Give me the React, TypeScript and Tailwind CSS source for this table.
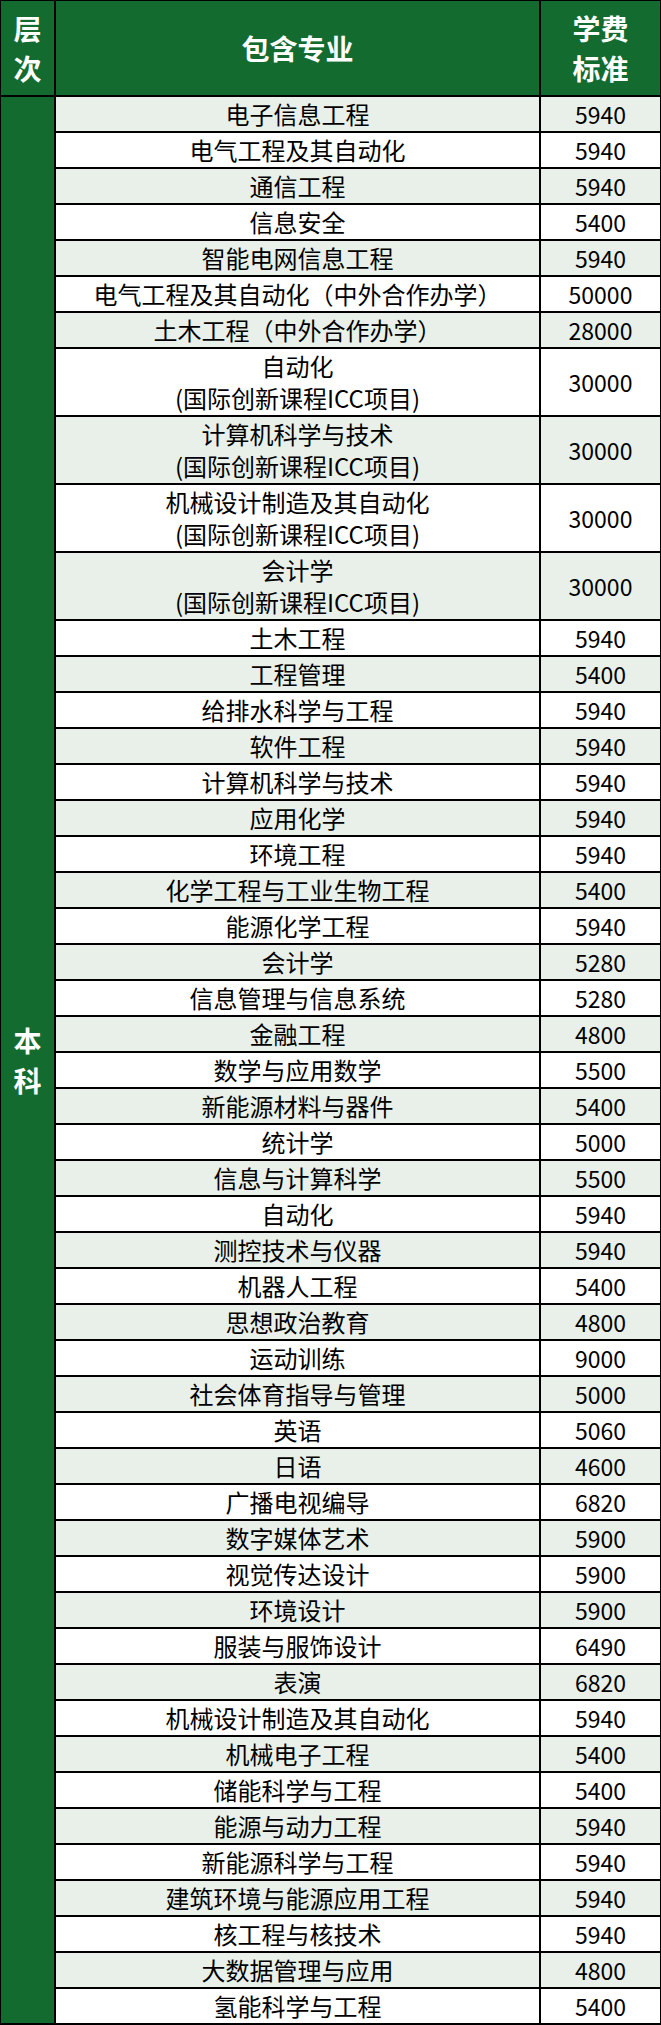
import React from "react";

type Row = { name: string; sub?: string; fee: string };

const rows: Row[] = [
  { name: "电子信息工程", fee: "5940" },
  { name: "电气工程及其自动化", fee: "5940" },
  { name: "通信工程", fee: "5940" },
  { name: "信息安全", fee: "5400" },
  { name: "智能电网信息工程", fee: "5940" },
  { name: "电气工程及其自动化（中外合作办学）", fee: "50000" },
  { name: "土木工程（中外合作办学）", fee: "28000" },
  { name: "自动化", sub: "(国际创新课程ICC项目)", fee: "30000" },
  { name: "计算机科学与技术", sub: "(国际创新课程ICC项目)", fee: "30000" },
  { name: "机械设计制造及其自动化", sub: "(国际创新课程ICC项目)", fee: "30000" },
  { name: "会计学", sub: "(国际创新课程ICC项目)", fee: "30000" },
  { name: "土木工程", fee: "5940" },
  { name: "工程管理", fee: "5400" },
  { name: "给排水科学与工程", fee: "5940" },
  { name: "软件工程", fee: "5940" },
  { name: "计算机科学与技术", fee: "5940" },
  { name: "应用化学", fee: "5940" },
  { name: "环境工程", fee: "5940" },
  { name: "化学工程与工业生物工程", fee: "5400" },
  { name: "能源化学工程", fee: "5940" },
  { name: "会计学", fee: "5280" },
  { name: "信息管理与信息系统", fee: "5280" },
  { name: "金融工程", fee: "4800" },
  { name: "数学与应用数学", fee: "5500" },
  { name: "新能源材料与器件", fee: "5400" },
  { name: "统计学", fee: "5000" },
  { name: "信息与计算科学", fee: "5500" },
  { name: "自动化", fee: "5940" },
  { name: "测控技术与仪器", fee: "5940" },
  { name: "机器人工程", fee: "5400" },
  { name: "思想政治教育", fee: "4800" },
  { name: "运动训练", fee: "9000" },
  { name: "社会体育指导与管理", fee: "5000" },
  { name: "英语", fee: "5060" },
  { name: "日语", fee: "4600" },
  { name: "广播电视编导", fee: "6820" },
  { name: "数字媒体艺术", fee: "5900" },
  { name: "视觉传达设计", fee: "5900" },
  { name: "环境设计", fee: "5900" },
  { name: "服装与服饰设计", fee: "6490" },
  { name: "表演", fee: "6820" },
  { name: "机械设计制造及其自动化", fee: "5940" },
  { name: "机械电子工程", fee: "5400" },
  { name: "储能科学与工程", fee: "5400" },
  { name: "能源与动力工程", fee: "5940" },
  { name: "新能源科学与工程", fee: "5940" },
  { name: "建筑环境与能源应用工程", fee: "5940" },
  { name: "核工程与核技术", fee: "5940" },
  { name: "大数据管理与应用", fee: "4800" },
  { name: "氢能科学与工程", fee: "5400" },
];

const font = { fontFamily: '"Noto Sans CJK SC", "Noto Sans", sans-serif' };

export default function App() {
  return (
    <div
      className="w-[661px] h-[2025px] bg-black pt-px pl-px pr-px pb-[2px] flex flex-col gap-[2px] text-black"
      style={font}
    >
      <div className="flex gap-[2px] h-[94px] shrink-0">
        <div className="w-[53px] bg-[#146b30] flex flex-col items-center justify-center text-white font-bold text-[28px] leading-[40px]">
          <span>层</span>
          <span>次</span>
        </div>
        <div className="w-[483px] bg-[#146b30] flex items-center justify-center text-white font-bold text-[28px]">
          包含专业
        </div>
        <div className="w-[119px] bg-[#146b30] flex flex-col items-center justify-center text-white font-bold text-[28px] leading-[40px]">
          <span>学费</span>
          <span>标准</span>
        </div>
      </div>
      <div className="flex gap-[2px] flex-1">
        <div className="w-[53px] bg-[#146b30] flex flex-col items-center justify-center text-white font-bold text-[28px] leading-[40px]">
          <span>本</span>
          <span>科</span>
        </div>
        <div className="w-[604px] flex flex-col gap-[2px]">
          {rows.map((r, i) => {
            const bg = i % 2 === 0 ? "bg-[#e8f0e9]" : "bg-white";
            const h = r.sub ? "h-[66px]" : "h-[34px]";
            return (
              <div key={i} className={`flex gap-[2px] ${h}`}>
                <div
                  className={`w-[483px] ${bg} flex flex-col items-center justify-center text-[24px] leading-[32px] whitespace-nowrap`}
                >
                  <span>{r.name}</span>
                  {r.sub && <span>{r.sub}</span>}
                </div>
                <div
                  className={`w-[119px] ${bg} flex items-center justify-center text-[23px] leading-[32px]`}
                >
                  {r.fee}
                </div>
              </div>
            );
          })}
        </div>
      </div>
    </div>
  );
}
